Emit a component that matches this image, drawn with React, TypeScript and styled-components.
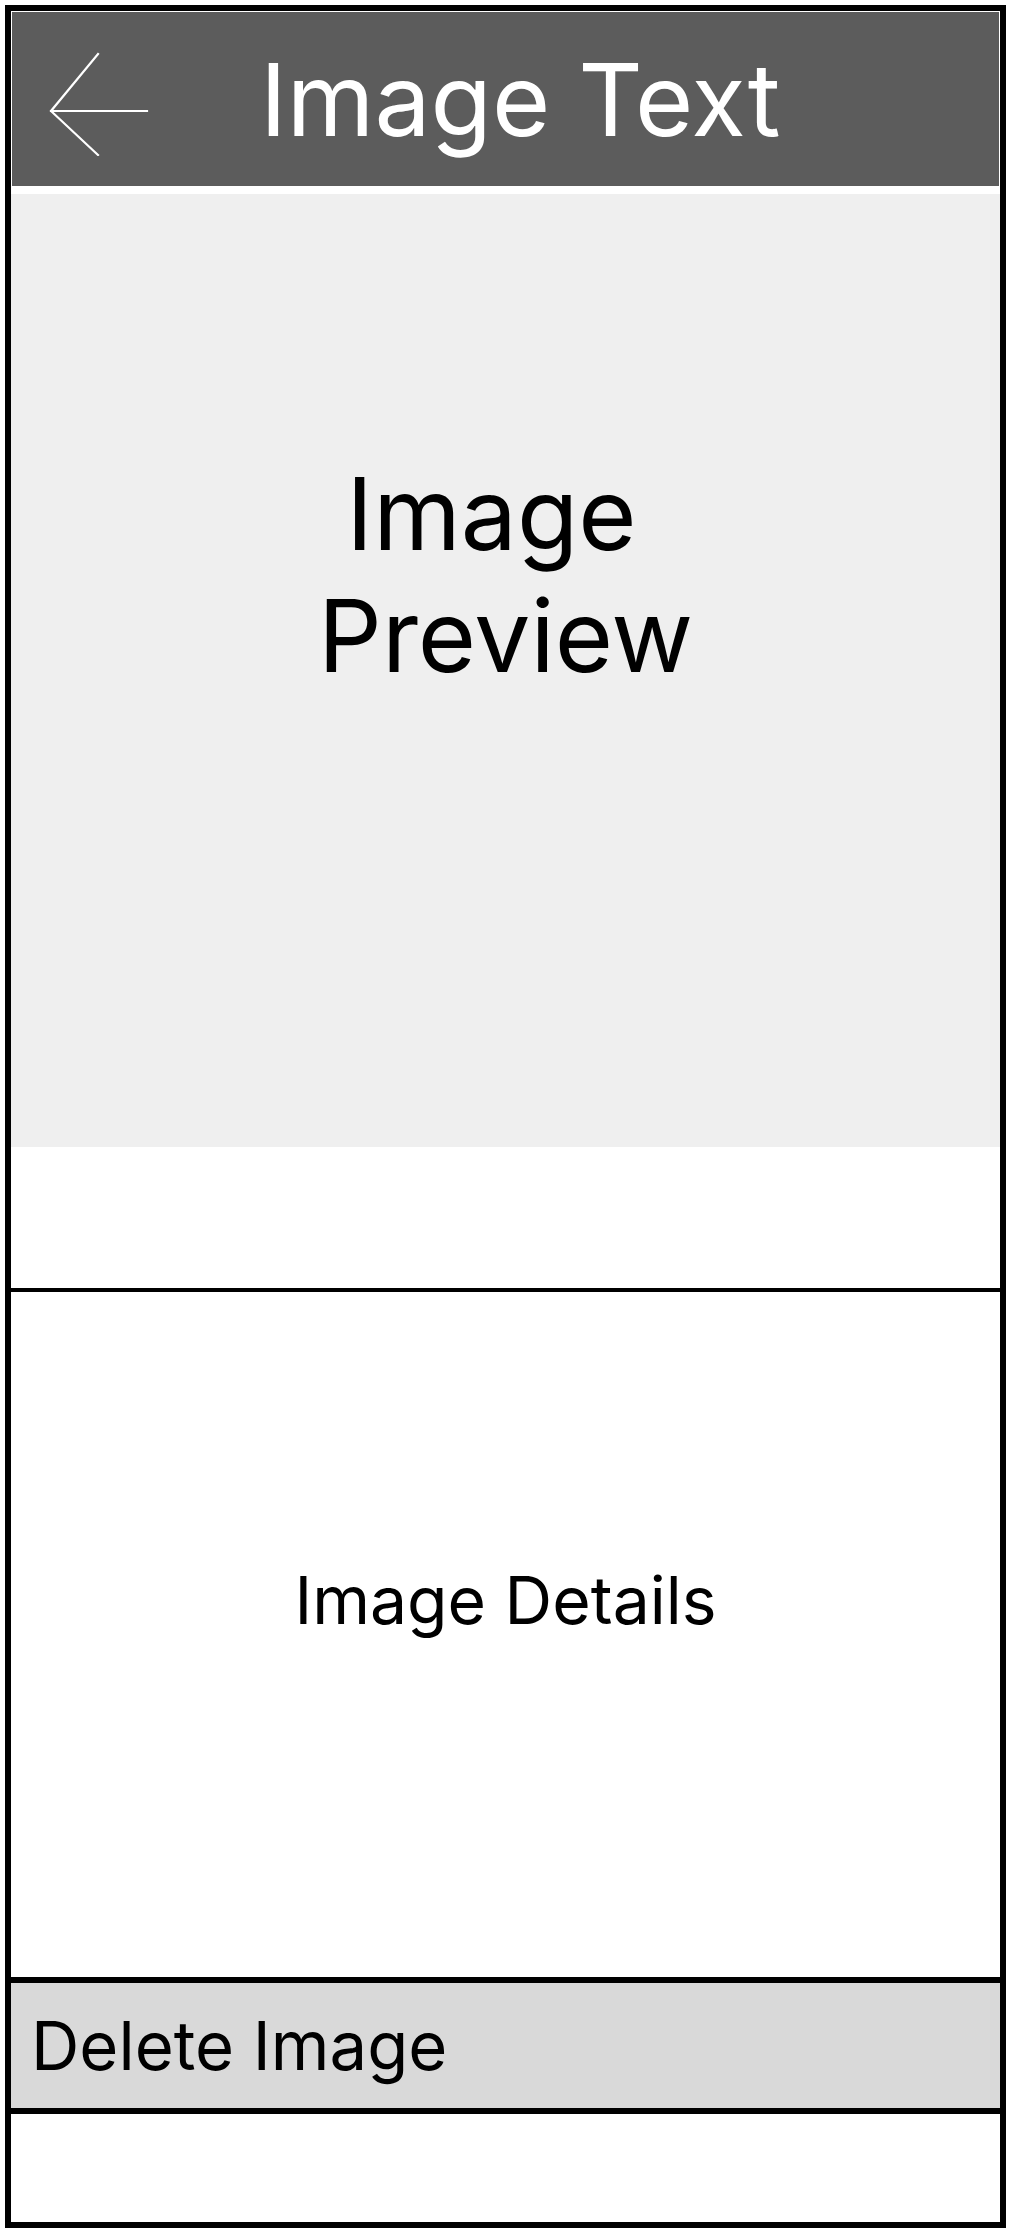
import styled, { createGlobalStyle } from "styled-components";

const GlobalStyle = createGlobalStyle`
  html, body {
    margin: 0;
    padding: 0;
    background: #ffffff;
  }
  body {
    font-family: Inter, "Noto Sans", "Liberation Sans", sans-serif;
    color: #000000;
  }
`;

const Frame = styled.div`
  box-sizing: border-box;
  margin: 5px 0 0 5px;
  width: 1001px;
  border: 6px solid #000000;
  display: flex;
  flex-direction: column;
  background: #ffffff;
`;

const Header = styled.header`
  margin: 1px 1px 0 1px;
  height: 174px;
  background: #5c5c5c;
  display: flex;
  align-items: center;
  padding-left: 36px;
`;

const BackButton = styled.button`
  border: none;
  background: transparent;
  padding: 0;
  margin-top: 10px;
  display: flex;
  cursor: pointer;
`;

const Title = styled.h1`
  margin: 0 0 0 110px;
  font-size: 100px;
  font-weight: 400;
  color: #ffffff;
  line-height: normal;
`;

const Spacer = styled.div<{ $h: number }>`
  height: ${(p) => p.$h}px;
`;

const Preview = styled.section`
  height: 953px;
  box-sizing: border-box;
  background: #efefef;
  padding-top: 259px;
  text-align: center;
`;

const PreviewText = styled.div`
  font-size: 100px;
  line-height: 122px;
`;

const Divider = styled.div<{ $w: number }>`
  height: ${(p) => p.$w}px;
  background: #000000;
`;

const Details = styled.section`
  height: 685px;
  box-sizing: border-box;
  padding-top: 268px;
  text-align: center;
  font-size: 66px;
  line-height: normal;
`;

const DeleteRow = styled.button`
  height: 125px;
  border: none;
  margin: 0;
  background: #d9d9d9;
  display: flex;
  align-items: center;
  padding: 0 0 0 20px;
  font-family: inherit;
  font-size: 67px;
  color: #000000;
  cursor: pointer;
`;

const BackArrow = () => (
  <svg width="102" height="104" viewBox="0 0 102 104" fill="none">
    <path
      d="M50 2 L3 59 L50 103 M3 59 H99"
      stroke="#ffffff"
      strokeWidth="2.2"
      strokeLinecap="square"
      strokeLinejoin="miter"
    />
  </svg>
);

export default function App() {
  return (
    <>
      <GlobalStyle />
      <Frame>
        <Header>
          <BackButton aria-label="Back">
            <BackArrow />
          </BackButton>
          <Title>Image Text</Title>
        </Header>
        <Spacer $h={8} />
        <Preview>
          <PreviewText>
            Image{"\u00a0"}
            <br />
            Preview
          </PreviewText>
        </Preview>
        <Spacer $h={141} />
        <Divider $w={4} />
        <Details>Image Details</Details>
        <Divider $w={6} />
        <DeleteRow>Delete Image</DeleteRow>
        <Divider $w={6} />
        <Spacer $h={108} />
      </Frame>
    </>
  );
}
